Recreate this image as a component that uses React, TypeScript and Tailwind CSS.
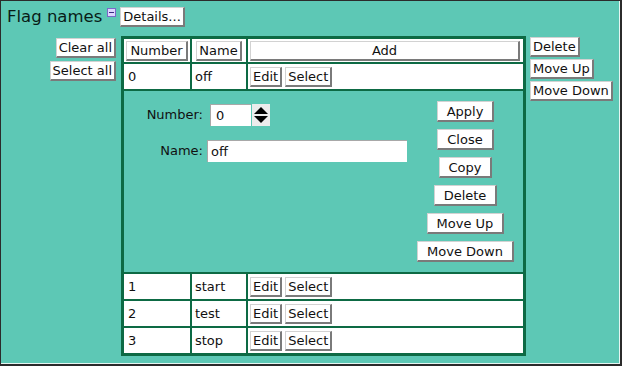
import React from "react";

const btn =
  "bg-white border border-[#d2d2d2] border-r-2 border-b-2 border-r-[#7a7a7a] border-b-[#7a7a7a] text-[13px] leading-[17px] text-[#111] whitespace-nowrap";

function Btn({ children, className = "" }: { children: React.ReactNode; className?: string }) {
  return <button className={btn + " " + className}>{children}</button>;
}

function Spinner() {
  return (
    <svg width="18" height="22" viewBox="0 0 18 22" className="block">
      <rect x="0" y="0" width="18" height="22" fill="#ececec" />
      <polygon points="2,10 16,10 9,3" fill="#000" />
      <polygon points="2,12 16,12 9,19" fill="#000" />
    </svg>
  );
}

const rows = [
  { n: "1", name: "start" },
  { n: "2", name: "test" },
  { n: "3", name: "stop" },
];

function DataRow({ n, name, selected = false }: { n: string; name: string; selected?: boolean }) {
  return (
    <div className="grid grid-cols-[66px_54px_275px] gap-[2px] h-[25px]">
      <div className="bg-white flex items-center pl-[4px] text-[13px] text-[#111]">{n}</div>
      <div className="bg-white flex items-center pl-[3px] text-[13px] text-[#111]">{name}</div>
      <div className="bg-white flex items-center pl-[2px] gap-[3px]">
        <Btn className="px-[2px]">Edit</Btn>
        <Btn className={selected ? "px-[2px] bg-[#d2d2d2]" : "px-[2px] bg-[#f4f4f4]"}>Select</Btn>
      </div>
    </div>
  );
}

export default function App() {
  return (
    <div className="w-[622px] h-[366px] box-border bg-[#5dc8b5] border-l border-t border-r-2 border-b-2 border-[#2b2b2b] font-['DejaVu_Sans',sans-serif]">
      <div className="h-full border-r border-b border-[#e6f6f2] pl-[6px] pt-[6px]">
        {/* Title row */}
        <div className="flex items-start h-[20px]">
          <span className="text-[16.5px] leading-[20px] text-[#081c17]">Flag names</span>
          <div className="ml-[5px] mt-[1px] w-[9px] h-[9px] border border-[#7a68c8] bg-[#ddd6ff] flex items-center justify-center">
            <div className="w-[5px] h-[1px] bg-[#3a2a80]" />
          </div>
          <Btn className="ml-[4px] px-[2px]">Details...</Btn>
        </div>

        {/* Main row */}
        <div className="flex items-start mt-[9px]">
          <div className="w-[109px] flex flex-col items-end gap-[3px] pt-[2px]">
            <Btn className="px-[2px]">Clear all</Btn>
            <Btn className="px-[2px]">Select all</Btn>
          </div>

          <div className="ml-[5px] bg-[#0d6a44] p-[3px] flex flex-col gap-[2px]">
            {/* header */}
            <div className="grid grid-cols-[66px_54px_275px] gap-[2px] h-[23px]">
              <div className="bg-white flex items-center justify-center">
                <Btn className="px-[3px]">Number</Btn>
              </div>
              <div className="bg-white flex items-center justify-center">
                <Btn className="px-[2px]">Name</Btn>
              </div>
              <div className="bg-white flex items-center pl-[2px] pr-[3px]">
                <Btn className="w-full">Add</Btn>
              </div>
            </div>

            <DataRow n="0" name="off" selected />

            {/* expanded editor */}
            <div className="h-[181px] bg-[#5dc8b5] flex items-start pt-[10px]">
              <div className="w-[288px] mt-[3px] flex flex-col gap-[14px]">
                <div className="flex items-center h-[22px]">
                  <div className="w-[79px] text-right text-[13px] text-[#111]">Number:</div>
                  <div className="ml-[7px] w-[41px] h-[22px] bg-white border-t border-l border-[#a8a8a8] flex items-center pl-[5px] text-[13px] text-[#111]">
                    0
                  </div>
                  <div className="ml-px">
                    <Spinner />
                  </div>
                </div>
                <div className="flex items-center h-[22px]">
                  <div className="w-[79px] text-right text-[13px] text-[#111]">Name:</div>
                  <div className="ml-[4px] w-[200px] h-[22px] bg-white border-t border-l border-[#a8a8a8] flex items-center pl-[3px] text-[13px] text-[#111]">
                    off
                  </div>
                </div>
              </div>
              <div className="ml-[5px] w-[97px] flex flex-col items-center gap-[7px]">
                <Btn className="h-[21px] px-[9px]">Apply</Btn>
                <Btn className="h-[21px] px-[9px]">Close</Btn>
                <Btn className="h-[21px] px-[9px]">Copy</Btn>
                <Btn className="h-[21px] px-[9px]">Delete</Btn>
                <Btn className="h-[21px] px-[9px]">Move Up</Btn>
                <Btn className="h-[21px] px-[9px]">Move Down</Btn>
              </div>
            </div>

            {rows.map((r) => (
              <DataRow key={r.n} n={r.n} name={r.name} />
            ))}
          </div>

          <div className="ml-[4px] flex flex-col items-start gap-[2px] pt-[1px]">
            <Btn className="px-[2px]">Delete</Btn>
            <Btn className="px-[2px]">Move Up</Btn>
            <Btn className="px-[2px]">Move Down</Btn>
          </div>
        </div>
      </div>
    </div>
  );
}
